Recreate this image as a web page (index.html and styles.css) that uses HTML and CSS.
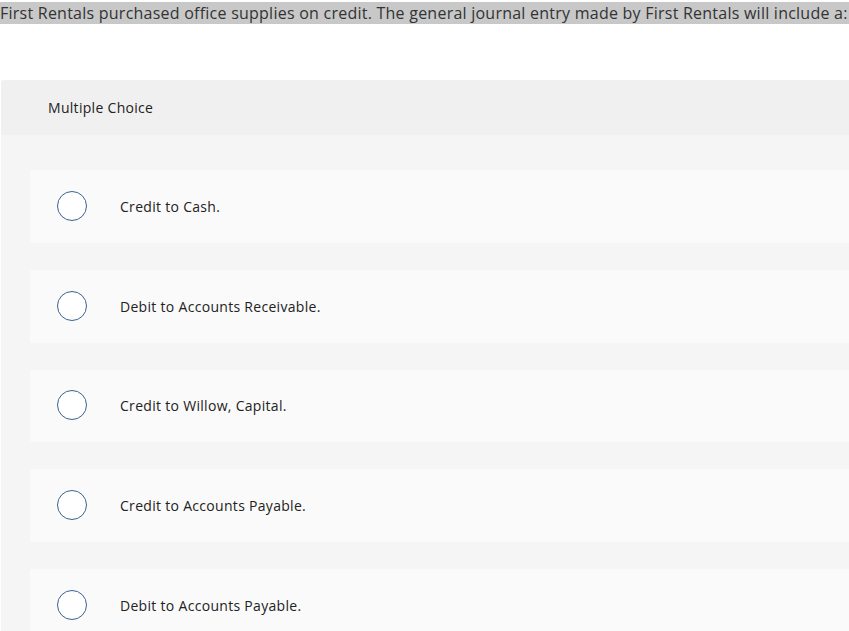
FILE: index.html
```html
<!DOCTYPE html>
<html>
<head>
<meta charset="utf-8">
<link rel="stylesheet" href="styles.css">
</head>
<body>
<div class="question"><span class="hl">First Rentals purchased office supplies on credit. The general journal entry made by First Rentals will include a:</span></div>
<section class="panel">
  <div class="panel-head">Multiple Choice</div>
  <div class="panel-body">
    <div class="option"><span class="radio"></span><span class="label">Credit to Cash.</span></div>
    <div class="option"><span class="radio"></span><span class="label">Debit to Accounts Receivable.</span></div>
    <div class="option"><span class="radio"></span><span class="label">Credit to Willow, Capital.</span></div>
    <div class="option"><span class="radio"></span><span class="label">Credit to Accounts Payable.</span></div>
    <div class="option"><span class="radio"></span><span class="label">Debit to Accounts Payable.</span></div>
  </div>
</section>
</body>
</html>
```
FILE: styles.css
```css
html, body {
  margin: 0;
  padding: 0;
  background: #ffffff;
  overflow: hidden;
}
body {
  width: 849px;
  height: 631px;
  font-family: "Open Sans", "Liberation Sans", sans-serif;
  color: #222222;
  letter-spacing: 0.3px;
}
.question {
  padding-top: 2px;
  height: 23px;
  white-space: nowrap;
  overflow: hidden;
  font-size: 16px;
  line-height: 22px;
  letter-spacing: 0.24px;
}
.hl {
  background: #c8c8c8;
  color: #333333;
  padding-right: 20px;
  display: inline-block;
}
.panel {
  margin-top: 55px;
  margin-left: 1px;
  width: 900px;
  border-radius: 3px 0 0 0;
  overflow: hidden;
}
.panel-head {
  background: #f0f0f0;
  height: 55px;
  display: flex;
  align-items: center;
  padding-left: 47px;
  font-size: 14px;
  color: #222;
}
.panel-body {
  background: #f5f5f5;
  padding: 35px 0 40px 29px;
  display: flex;
  flex-direction: column;
  gap: 27px;
}
.option {
  background: #fafafa;
  height: 72.75px;
  border-radius: 3px;
  display: flex;
  align-items: center;
}
.radio {
  width: 28px;
  height: 28px;
  border: 1.5px solid #3a618f;
  border-radius: 50%;
  background: #ffffff;
  margin-left: 27px;
  margin-top: -1px;
  flex: none;
}
.label {
  margin-left: 33px;
  font-size: 14px;
  color: #222;
}
```
